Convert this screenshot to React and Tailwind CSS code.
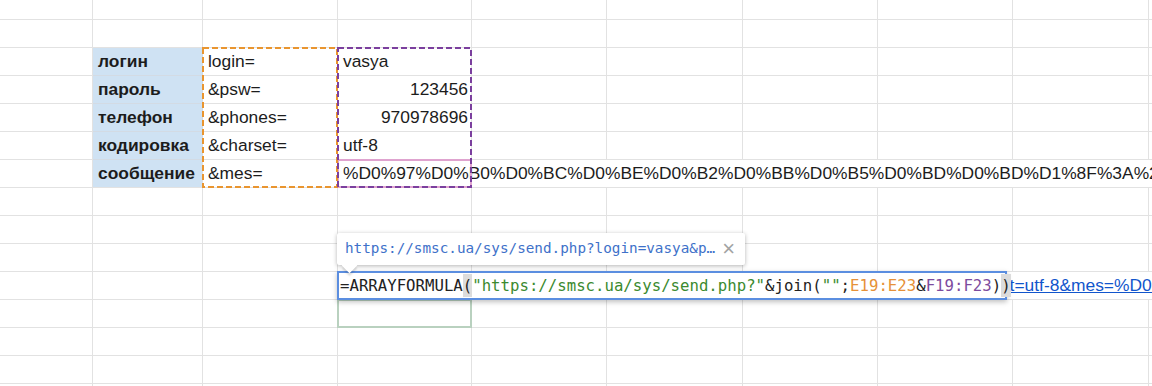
import React from 'react';

const COLS = [
  'w-[93px]',
  'w-[110px]',
  'w-[135px]',
  'w-[134px]',
  'w-[135px]',
  'w-[136px]',
  'w-[135px]',
  'w-[135px]',
  'w-[136px]',
  'w-[60px]',
];

const LABELS = [
  ['логин', 'login=', 'vasya', false],
  ['пароль', '&psw=', '123456', true],
  ['телефон', '&phones=', '970978696', true],
  ['кодировка', '&charset=', 'utf-8', false],
];

const MESSAGE =
  '%D0%97%D0%B0%D0%BC%D0%BE%D0%B2%D0%BB%D0%B5%D0%BD%D0%BD%D1%8F%3A%20%D0%9D%D0%BE%D0%B2%D0%B8%D0%B9';

const URL_VALUE =
  'https://smsc.ua/sys/send.php?login=vasya&psw=123456&phones=970978696&charset=utf-8&mes=%D0%97%D0%B0%D0%BC%D0%BE%D0%B2';

const line = 'border-r border-b border-[#e2e2e2]';

function EmptyRow({ h = 'h-[28px]' }) {
  return (
    <div className={`flex ${h}`}>
      {COLS.map((w, i) => (
        <div key={i} className={`${w} shrink-0 ${line}`} />
      ))}
    </div>
  );
}

// a row whose C cell text runs over the cells to its right
function OverflowRow({ a, b, children, labelRow }) {
  return (
    <div className="flex h-[28px]">
      <div className={`${COLS[0]} shrink-0 ${line}`} />
      <div
        className={`${COLS[1]} shrink-0 ${line} ${
          labelRow ? 'bg-[#cfe2f3] border-[#d3dbe4]' : ''
        } flex items-center px-[5px] font-bold`}
      >
        {a}
      </div>
      <div className={`${COLS[2]} shrink-0 ${line} flex items-center px-[5px]`}>{b}</div>
      <div className="w-[134px] shrink-0 border-b border-[#e2e2e2] flex items-center pl-[5px] whitespace-nowrap">
        {children}
      </div>
      <div className="flex-1 border-b border-[#e2e2e2]" />
    </div>
  );
}

function DataRow({ label, keyText, value, right }) {
  return (
    <div className="flex h-[28px]">
      <div className={`${COLS[0]} shrink-0 ${line}`} />
      <div className="w-[110px] shrink-0 border-r border-b border-[#d3dbe4] bg-[#cfe2f3] flex items-center px-[5px] font-bold">
        {label}
      </div>
      <div className={`${COLS[2]} shrink-0 ${line} flex items-center px-[5px]`}>{keyText}</div>
      <div
        className={`${COLS[3]} shrink-0 ${line} flex items-center pr-[3px] pl-[5px] ${
          right ? 'justify-end' : ''
        }`}
      >
        {value}
      </div>
      {COLS.slice(4).map((w, i) => (
        <div key={i} className={`${w} shrink-0 ${line}`} />
      ))}
    </div>
  );
}

function FormulaEditor() {
  return (
    <div className="absolute left-[337px] top-[271px] z-20 w-[670px] h-[29px] border-2 border-[#5b8ee0] bg-white shadow-[0_2px_5px_rgba(0,0,0,0.25)] flex items-center pl-[1px] font-['DejaVu_Sans_Mono',monospace] text-[15.7px] text-[#222] whitespace-nowrap">
      <span>=ARRAYFORMULA</span>
      <span className="bg-[#dcdcdc]">(</span>
      <span className="text-[#3b8a2f]">"https://smsc.ua/sys/send.php?"</span>
      <span>&amp;join(</span>
      <span className="text-[#3b8a2f]">""</span>
      <span>;</span>
      <span className="text-[#e69138]">E19:E23</span>
      <span>&amp;</span>
      <span className="text-[#7d4b9e]">F19:F23</span>
      <span>)</span>
      <span className="bg-[#dcdcdc]">)</span>
      <span className="w-[2px] h-[19px] bg-black" />
    </div>
  );
}

function LinkTooltip() {
  return (
    <div className="absolute left-[337px] top-[233px] z-30 w-[408px] h-[32px] bg-white rounded-[2px] shadow-[0_1px_4px_rgba(0,0,0,0.3)] flex items-center pl-[8px] font-['DejaVu_Sans_Mono',monospace] text-[14.3px] text-[#3e71c9]">
      <span className="whitespace-nowrap">https://smsc.ua/sys/send.php?login=vasya&amp;p…</span>
      <span className="ml-[7px] font-['Liberation_Sans',sans-serif] text-[22px] leading-none text-[#a3a3a3]">×</span>
      <div className="absolute left-[7px] bottom-[-6px] w-[11px] h-[11px] rotate-45 bg-white shadow-[2px_2px_2px_rgba(0,0,0,0.15)]" />
    </div>
  );
}

function RangeMarks() {
  return (
    <svg
      className="absolute left-0 top-0 z-10 pointer-events-none"
      width="1152"
      height="386"
    >
      <rect x="338" y="160" width="133" height="27" fill="none" stroke="#dfa3cf" strokeWidth="2" />
      <rect
        x="203"
        y="48"
        width="134"
        height="139"
        fill="none"
        stroke="#e9952f"
        strokeWidth="2"
        strokeDasharray="6 3"
      />
      <rect
        x="338"
        y="48"
        width="133"
        height="139"
        fill="none"
        stroke="#7b3f9e"
        strokeWidth="2"
        strokeDasharray="6 3"
      />
      <rect x="338" y="300" width="133" height="27" fill="none" stroke="#b9d1bf" strokeWidth="2" />
    </svg>
  );
}

export default function App() {
  return (
    <div className="relative w-[1152px] h-[386px] overflow-hidden bg-white font-['Liberation_Sans',Arial,sans-serif] text-[17.4px] text-[#1c1c1c]">
      <EmptyRow h="h-[20px]" />
      <EmptyRow />
      {LABELS.map(([label, k, v, right]) => (
        <DataRow key={label} label={label} keyText={k} value={v} right={right} />
      ))}
      <OverflowRow a="сообщение" b="&mes=" labelRow>
        {MESSAGE}
      </OverflowRow>
      <EmptyRow />
      <EmptyRow />
      <EmptyRow />
      <OverflowRow>
        <span className="text-[#1155cc] underline">{URL_VALUE}</span>
      </OverflowRow>
      <EmptyRow />
      <EmptyRow />
      <EmptyRow />
      <EmptyRow />

      <RangeMarks />
      <LinkTooltip />
      <FormulaEditor />
    </div>
  );
}
